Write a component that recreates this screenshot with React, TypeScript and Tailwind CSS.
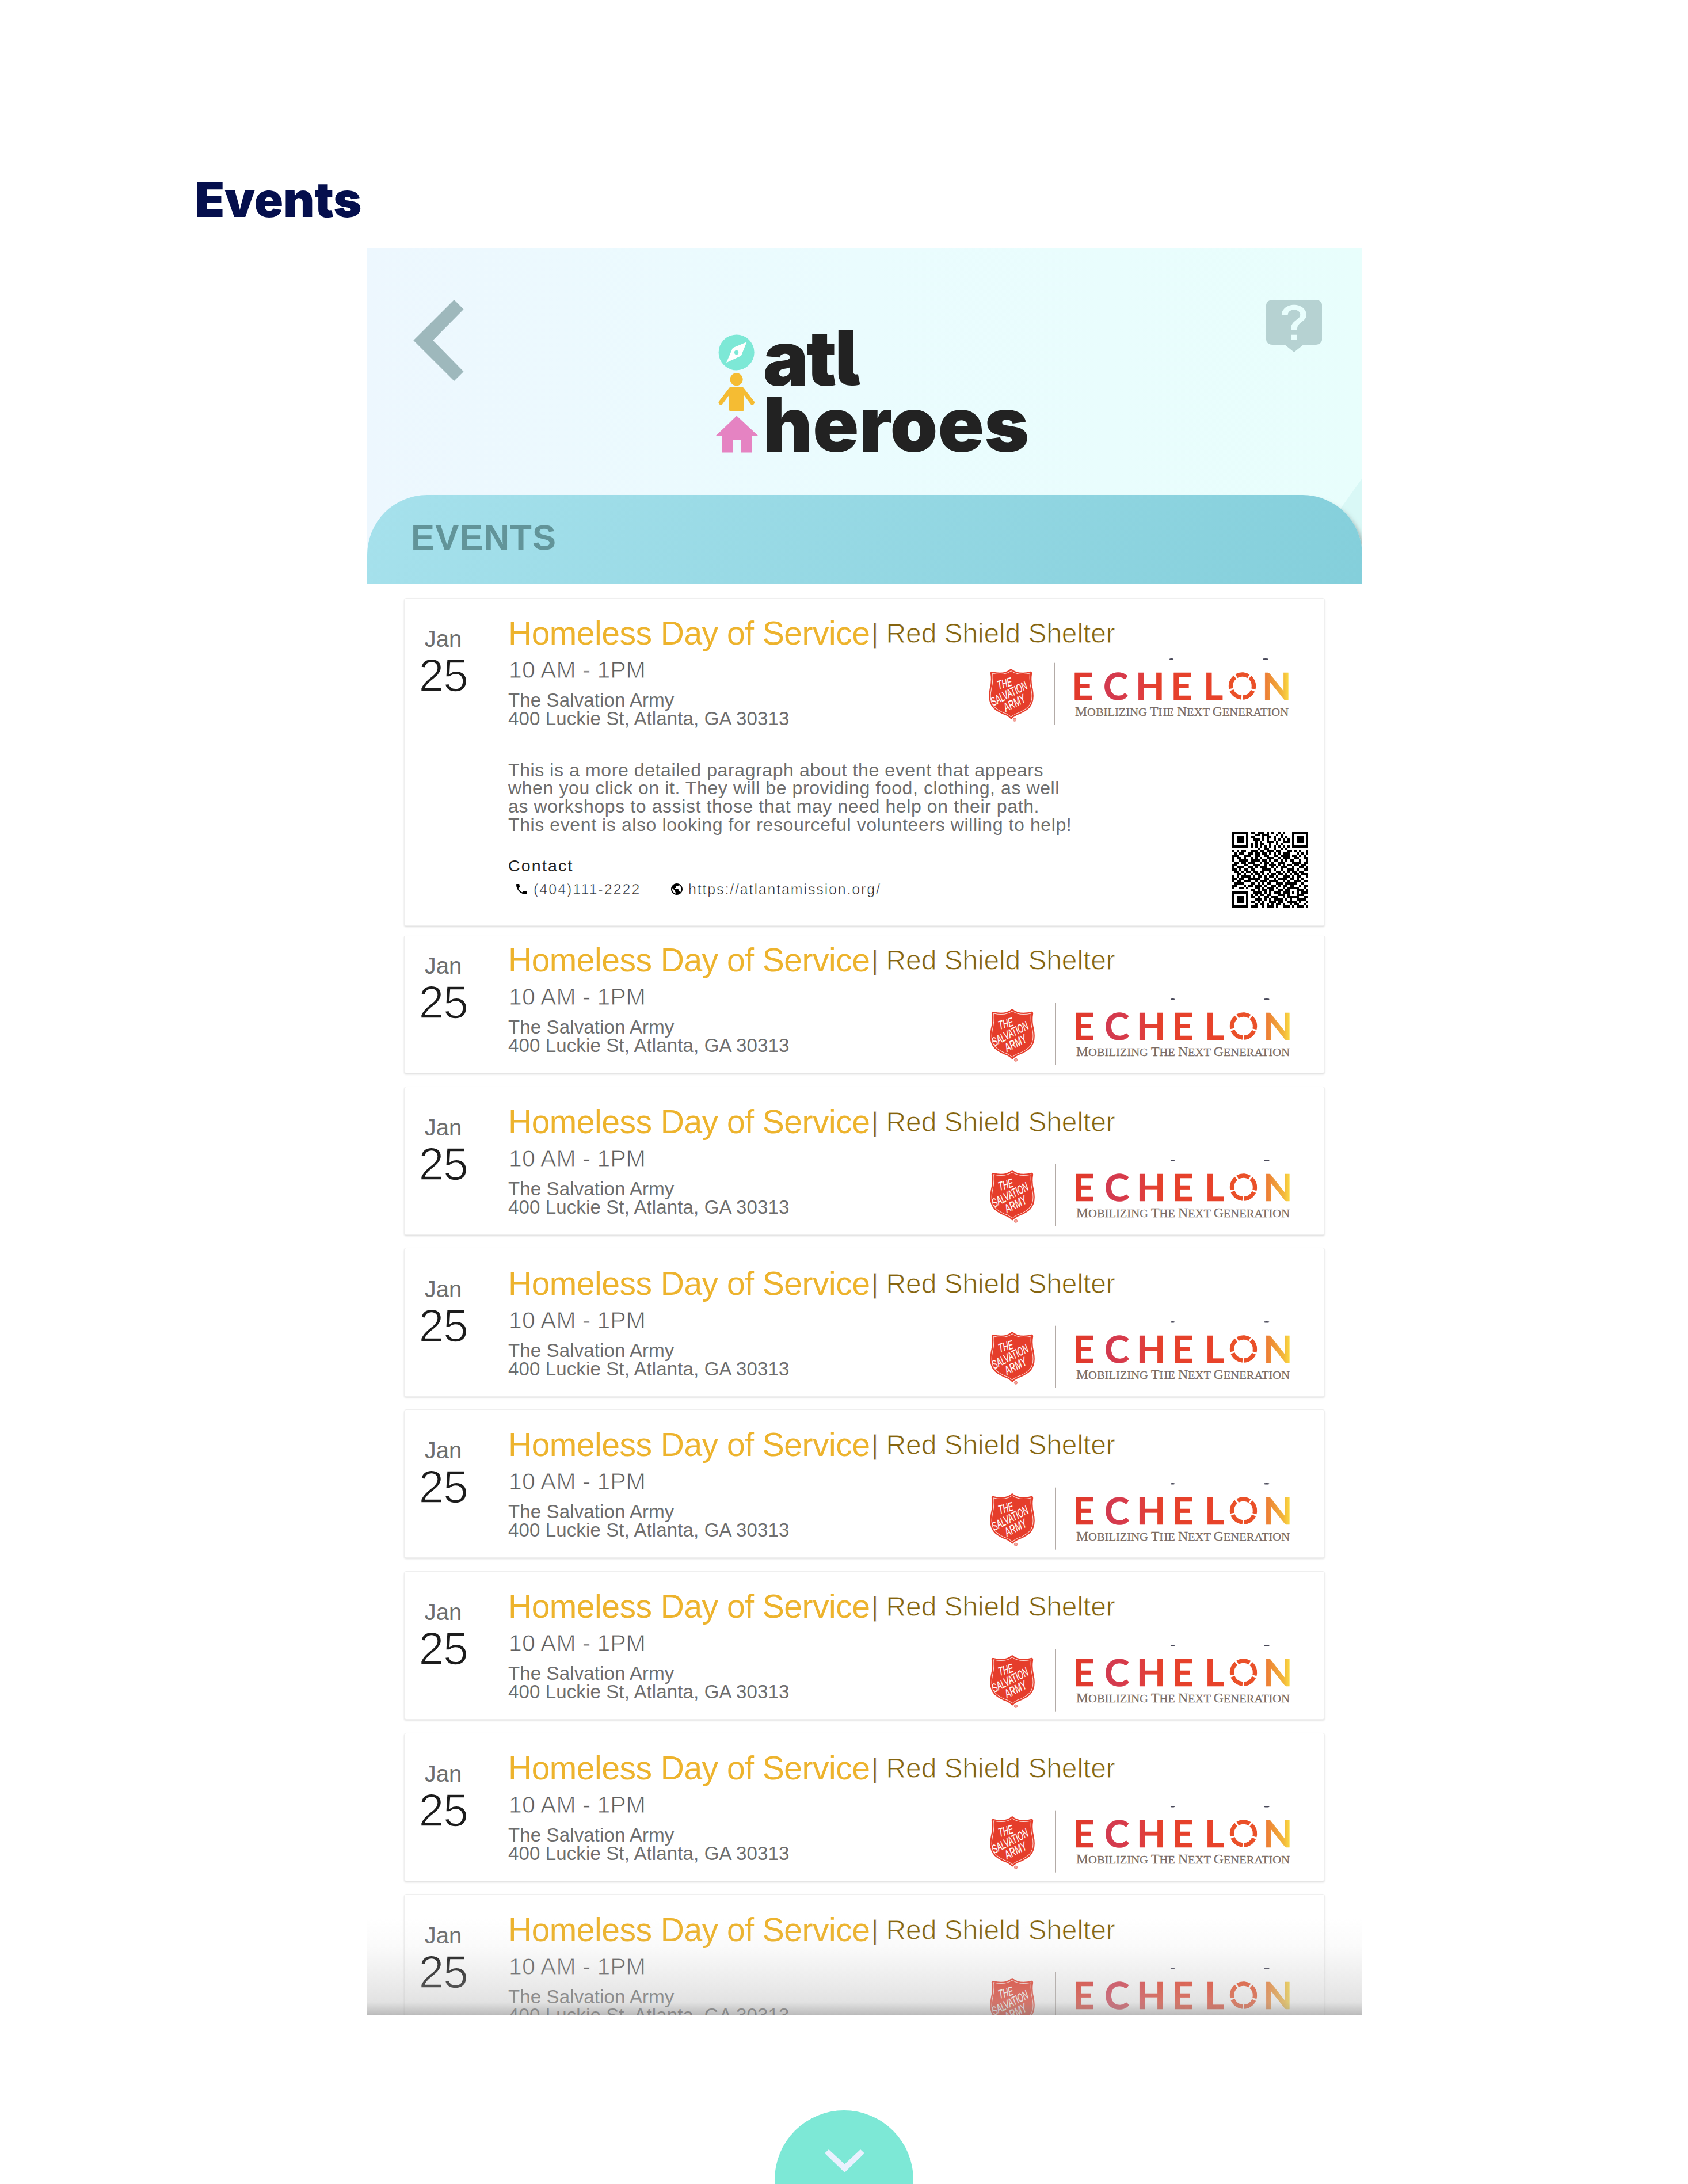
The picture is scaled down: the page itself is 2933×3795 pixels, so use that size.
import React from "react";
import { MdPhone, MdPublic } from "react-icons/md";

const QR_ROWS = [
  "111111101101110101001010001111111",
  "100000100011011100010100001000001",
  "101110101100010110100101001011101",
  "101110100111010100101010101011101",
  "101110100010100111010011101011101",
  "100000101010110010010100001000001",
  "111111101010101010101010101111111",
  "000000000001001100100101000000000",
  "101011001110110111011000110101001",
  "010110011011011010101011100010101",
  "111001110011001100110111101101010",
  "101101001010100111001011100110011",
  "100111101111011010110101011001001",
  "011011011100101101001110001111011",
  "110001100111001011101010110110110",
  "101110011010111001010111001001101",
  "110101101100011110100100111010011",
  "011010110110110010011010101101100",
  "001101001011010101101101010110111",
  "101011110101101011010011101011001",
  "110110011111001100101111011010100",
  "101101110010111011110010100111011",
  "011110001101010110011101111100100",
  "110001011011101001101011011001011",
  "100110100011010111010010111110010",
  "000000001101011011001101100011101",
  "111111100111101010111011101010111",
  "100000101010110110001110100011100",
  "101110101101001101110010111110011",
  "101110100011101010111101010011110",
  "101110101101010011101100111101001",
  "100000100010110101011010010110010",
  "111111101110010111010011101011101",
];

function QrCode() {
  return (
    <svg className="h-[132px] w-[132px] shrink-0" viewBox="0 0 33 33" shapeRendering="crispEdges">
      {QR_ROWS.map((row, y) =>
        row.split("").map((bit, x) =>
          bit === "1" ? <rect key={`${x}-${y}`} x={x} y={y} width="1" height="1" fill="#000" /> : null,
        ),
      )}
    </svg>
  );
}

function SponsorLogos({ shifted }: { shifted: boolean }) {
  return (
    <svg
      className={
        shifted
          ? "mt-[23.5px] mr-[38.5px] h-[135px] w-[560px] shrink-0"
          : "mt-[1px] mr-[40.5px] -mb-[1px] h-[135px] w-[560px] shrink-0"
      }
      viewBox="0 10 560 135"
    >
      <defs>
        <linearGradient id="echelon" gradientUnits="userSpaceOnUse" x1="166" y1="0" x2="539" y2="0">
          <stop offset="0" stopColor="#e23a2a" />
          <stop offset="0.07" stopColor="#df3a32" />
          <stop offset="0.1" stopColor="#cf3a52" />
          <stop offset="0.2" stopColor="#d63a4c" />
          <stop offset="0.3" stopColor="#dd3d42" />
          <stop offset="0.38" stopColor="#e5402c" />
          <stop offset="0.7" stopColor="#e8432a" />
          <stop offset="0.84" stopColor="#ec5a2c" />
          <stop offset="0.9" stopColor="#ed8536" />
          <stop offset="0.97" stopColor="#f3b83b" />
          <stop offset="1" stopColor="#fbdc42" />
        </linearGradient>
      </defs>
      <g transform="scale(0.35714 0.33333)">
        <path
          d="M156 125Q122 158 62 140Q54 141 56 152Q62 190 52 232Q40 300 70 332Q96 356 130 368Q148 378 156 390Q166 378 184 368Q218 356 244 332Q274 300 262 232Q252 190 258 152Q259 141 251 140Q190 158 156 125Z"
          fill="#e53d2b"
        />
        <path
          d="M156 137Q124 164 66 150Q70 190 60 234Q48 296 76 326Q100 350 134 361Q148 368 156 378Q166 368 180 361Q214 350 238 326Q266 296 254 234Q244 190 248 150Q190 164 156 137Z"
          fill="none"
          stroke="#fbd9d3"
          strokeWidth="3"
        />
      </g>
      <g fill="#fff" stroke="#fff" strokeWidth="0.3" fontFamily="Liberation Sans" fontSize="21" fontStyle="italic">
        <text transform="translate(34 78) rotate(-16)" textLength="26" lengthAdjust="spacingAndGlyphs">
          THE
        </text>
        <text transform="translate(25 107) rotate(-27)" textLength="68" lengthAdjust="spacingAndGlyphs">
          SALVATION
        </text>
        <text transform="translate(47 117) rotate(-27)" textLength="40" lengthAdjust="spacingAndGlyphs">
          ARMY
        </text>
      </g>
      <circle cx="62" cy="130.7" r="2.6" fill="#f3a79f" stroke="#e8695c" strokeWidth="0.8" />
      <rect x="130" y="31.7" width="2" height="108" fill="#b3aba7" />
      <ellipse cx="334.5" cy="25.3" rx="3.6" ry="1.3" fill="#4a4a5a" />
      <ellipse cx="497.8" cy="25.3" rx="4.8" ry="1.3" fill="#4a4a5a" />
      <text
        x="161.5 216 272 333.5 390 492"
        y="96"
        fontFamily="Lato"
        fontWeight="700"
        fontSize="65.5"
        fill="url(#echelon)"
        stroke="url(#echelon)"
        strokeWidth="0.7"
      >
        ECHELN
      </text>
      <circle
        cx="457.5"
        cy="72"
        r="20"
        fill="none"
        stroke="#ea5029"
        strokeWidth="7.4"
        strokeDasharray="22.13 3"
        transform="rotate(94.3 457.5 72)"
      />
      <text
        x="167"
        y="124"
        fontFamily="Liberation Serif"
        fontSize="19.5"
        fill="#7c6d65"
        stroke="#7c6d65"
        strokeWidth="0.3"
        textLength="371"
        lengthAdjust="spacingAndGlyphs"
      >
        <tspan fontSize="22.5">M</tspan>OBILIZING <tspan fontSize="22.5">T</tspan>HE{" "}
        <tspan fontSize="22.5">N</tspan>EXT <tspan fontSize="22.5">G</tspan>ENERATION
      </text>
    </svg>
  );
}

function Details() {
  return (
    <div className="flex items-start justify-between">
      <div className="pt-[58px]">
        <p className="text-[32px] leading-[31.7px] tracking-[0.6px] whitespace-nowrap text-[#6e6e6e]">
          This is a more detailed paragraph about the event that appears
          <br />
          when you click on it. They will be providing food, clothing, as well
          <br />
          as workshops to assist those that may need help on their path.
          <br />
          This event is also looking for resourceful volunteers willing to help!
        </p>
        <h3 className="mt-[41px] text-[28.5px] leading-[28px] tracking-[2.2px] text-[#222222]">Contact</h3>
        <div className="mt-[15px] flex items-center text-[25px] leading-[24px] tracking-[2px] text-[#222222]">
          <MdPhone className="ml-[11px] h-[24px] w-[24px] text-black" />
          <span className="ml-[9px] w-[237px] [-webkit-text-stroke:0.6px_white]">(404)111-2222</span>
          <MdPublic className="h-[24px] w-[24px] text-black" />
          <span className="ml-[8px] tracking-[1.85px] [-webkit-text-stroke:0.6px_white]">
            https://atlantamission.org/
          </span>
        </div>
      </div>
      <div className="mt-[180px] mr-[28px]">
        <QrCode />
      </div>
    </div>
  );
}

type CardKind = "open" | "tucked" | "plain";

const CARD_CLASS: Record<CardKind, string> = {
  open: "h-[570px] rounded-[4px] border pt-[32px] mb-[17.5px]",
  tucked: "h-[239px] rounded-b-[4px] border border-t-0 pt-[14px] mb-[22.5px]",
  plain: "h-[258.3px] rounded-[4px] border pt-[32.3px] mb-[22.5px]",
};

function EventCard({ kind }: { kind: CardKind }) {
  return (
    <article
      className={`flex w-[1600px] shrink-0 border-[#efefef] bg-white shadow-[0_2px_3px_rgba(0,0,0,0.12)] ${CARD_CLASS[kind]}`}
    >
      <div className="w-[180px] shrink-0 pt-[18px] pr-[46px] text-center">
        <div className="text-[40px] leading-[40px] text-[#6e6e6e]">Jan</div>
        <div className="mt-[4px] text-[79px] leading-[79px] tracking-[-1.5px] text-[#1c1c1c] [-webkit-text-stroke:1.6px_white]">
          25
        </div>
      </div>
      <div className="flex-1">
        <div className="flex h-[57px] items-start whitespace-nowrap">
          <h2 className="w-[631px] text-[57px] leading-[57px] tracking-[-0.5px] text-[#edb32d]">
            Homeless Day of Service
          </h2>
          <span className="pt-[5px] text-[48px] leading-[48px] tracking-[-0.12px] text-[#85640f] [-webkit-text-stroke:0.9px_white]">
            | Red Shield Shelter
          </span>
        </div>
        <div className="flex items-start justify-between">
          <div className="pt-[15px]">
            <div className="ml-[1px] text-[41px] leading-[41px] tracking-[0.1px] whitespace-nowrap text-[#606060] [-webkit-text-stroke:0.8px_white]">
              10 AM - 1PM
            </div>
            <p className="mt-[16px] text-[33px] leading-[32px] tracking-[0.13px] whitespace-nowrap text-[#6e6e6e]">
              The Salvation Army
              <br />
              400 Luckie St, Atlanta, GA 30313
            </p>
          </div>
          <SponsorLogos shifted={kind !== "open"} />
        </div>
        {kind === "open" && <Details />}
      </div>
    </article>
  );
}

function BrandLogo() {
  return (
    <div className="ml-[605px] flex">
      <svg className="mt-[11px] h-[222px] w-[76px]" viewBox="1243 570 76 222">
        <circle cx="1279.6" cy="613.4" r="31" fill="#7de8d6" />
        <path
          d="M1297.5 595.3L1273.2 605.5L1262 631.2L1287.8 619.3ZM1279.6 609.8a3.6 3.6 0 1 1 0 7.2a3.6 3.6 0 1 1 0-7.2Z"
          fill="#fff"
          fillRule="evenodd"
        />
        <circle cx="1279.6" cy="660.3" r="11" fill="#f5bc33" />
        <path
          d="M1268.5 673.3H1290.6L1310.5 698.5A4 4 0 0 1 1304.5 703.5L1293 688V712.5A3 3 0 0 1 1290 715.3H1269.5A3 3 0 0 1 1266.5 712.5V688L1255 703.5A4 4 0 0 1 1249 698.5Z"
          fill="#f5bc33"
        />
        <path d="M1280 723.5L1317 758H1306V787.6H1288V765H1273V787.6H1254.5V758H1244Z" fill="#e583c2" />
      </svg>
      <div className="mt-[7px] ml-[7px] font-[Inter] text-[132px] leading-[115px] font-black text-[#222222] [font-feature-settings:'cv05']">
        <div className="tracking-[-4px]">atl</div>
        <div className="tracking-[0.6px]">heroes</div>
      </div>
    </div>
  );
}

function Header() {
  return (
    <header className="relative flex h-[584px] shrink-0 flex-col overflow-hidden bg-linear-to-r from-[#edf7fe] via-[#eafcfe] via-50% to-[#e8fefc]">
      <svg className="absolute right-0 bottom-0 h-[184px] w-[160px]" viewBox="0 0 160 184">
        <path d="M160 0L28 184H160Z" fill="#d9f8f6" />
      </svg>
      <div className="flex h-[127px] items-start justify-between">
        <svg className="mt-[90px] ml-[80px] h-[141px] w-[88px] shrink-0" viewBox="718 521 88 141">
          <path d="M789 521L805.5 537.6L752.3 591.4L805.5 645.7L789 662L718.4 591.4Z" fill="#9eb8bc" />
        </svg>
        <svg
          className="mt-[90px] mr-[70px] h-[91px] w-[97px] shrink-0"
          viewBox="3 2 18 21"
          preserveAspectRatio="none"
        >
          <path
            d="M19 2H5a2 2 0 0 0-2 2v14a2 2 0 0 0 2 2h4l3 3 3-3h4c1.1 0 2-.9 2-2V4c0-1.1-.9-2-2-2zm-6 16h-2v-2h2v2zm2.07-7.75-.9.92C13.45 11.9 13 12.5 13 14h-2v-.5c0-1.1.45-2.1 1.17-2.83l1.24-1.26c.37-.36.59-.86.59-1.41 0-1.1-.9-2-2-2s-2 .9-2 2H8c0-2.21 1.79-4 4-4s4 1.79 4 4c0 .88-.36 1.68-.93 2.25z"
            fill="#b6d2d2"
          />
        </svg>
      </div>
      <div className="h-[302px]">
        <BrandLogo />
      </div>
      <div className="relative flex h-[155px] shrink-0 items-start rounded-t-[104px] bg-linear-115 from-[#a6e1ec] to-[#84cfdb] pt-[43px] pl-[76px] shadow-[7px_6px_8px_-3px_rgba(90,90,90,0.5)]">
        <h2 className="text-[61.5px] leading-[61.5px] font-bold tracking-[1.2px] text-[#629499]">EVENTS</h2>
      </div>
    </header>
  );
}

const CARDS: CardKind[] = ["open", "tucked", "plain", "plain", "plain", "plain", "plain", "plain"];

export default function App() {
  return (
    <main className="flex h-[3795px] w-[2933px] flex-col overflow-hidden bg-white font-['Liberation_Sans',sans-serif]">
      <h1 className="mt-[297px] ml-[339px] h-[134px] shrink-0 font-[Inter] text-[83.5px] leading-[100px] font-black text-[#050f4d]">
        Events
      </h1>
      <section className="relative ml-[638px] flex h-[3070px] w-[1729px] shrink-0 flex-col overflow-hidden">
        <Header />
        <div className="flex flex-col pt-[23.5px] pl-[64px]">
          {CARDS.map((kind, i) => (
            <EventCard key={i} kind={kind} />
          ))}
        </div>
        <div className="absolute inset-x-0 bottom-0 h-[170px] bg-[linear-gradient(to_bottom,rgba(190,190,190,0)_0%,rgba(190,190,190,0.07)_30%,rgba(190,190,190,0.32)_70%,rgba(188,188,188,0.43)_87%,rgba(165,165,165,0.55)_94%,rgba(145,145,145,0.62)_100%)]" />
      </section>
      <div className="mt-[166px] ml-[1346px] flex h-[241px] w-[241px] shrink-0 items-start rounded-full bg-[#7de8d6] pt-[68px] pl-[87px]">
        <svg className="h-[40px] w-[70px]" viewBox="1433 3735 70 40">
          <path d="M1440 3735L1467.6 3760.5L1495 3735L1502 3741.5L1467.6 3775L1433 3741.5Z" fill="#e9f1fe" />
        </svg>
      </div>
    </main>
  );
}
